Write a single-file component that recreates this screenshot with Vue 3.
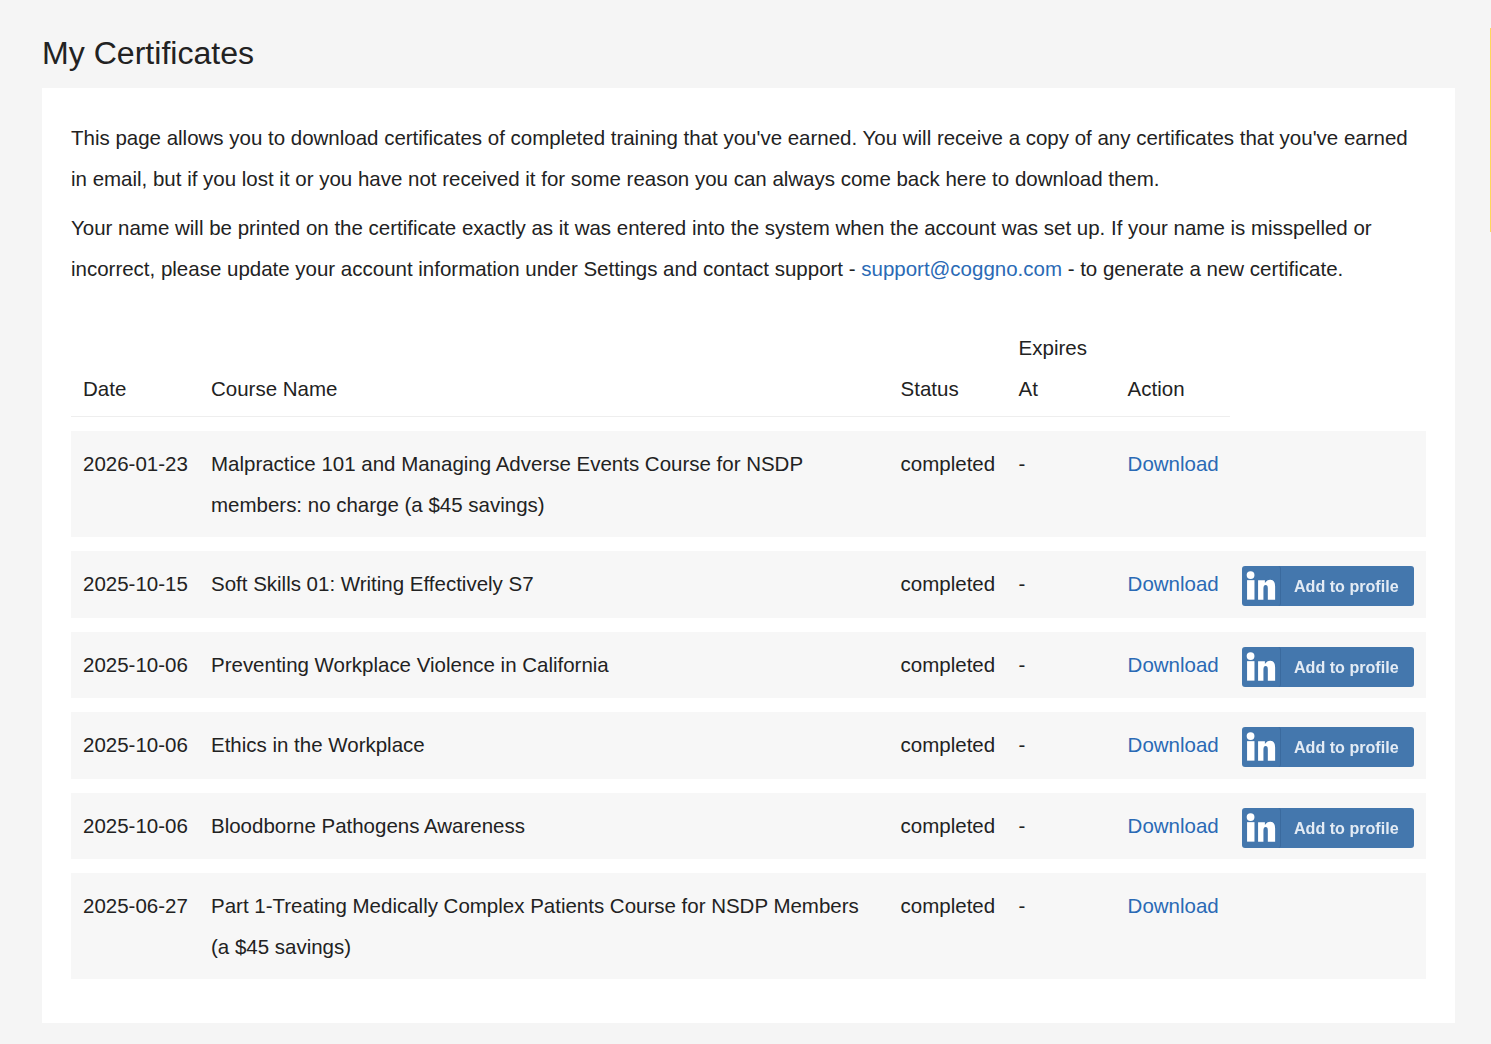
<template>
  <div class="page">
    <h1>My Certificates</h1>
    <div class="panel">
      <p>This page allows you to download certificates of completed training that you've earned. You will receive a copy of any certificates that you've earned in email, but if you lost it or you have not received it for some reason you can always come back here to download them.</p>
      <p>Your name will be printed on the certificate exactly as it was entered into the system when the account was set up. If your name is misspelled or incorrect, please update your account information under Settings and contact support - <a href="#">support@coggno.com</a> - to generate a new certificate.</p>
      <table>
        <colgroup>
          <col class="c-date" />
          <col class="c-name" />
          <col class="c-status" />
          <col class="c-expires" />
          <col class="c-action" />
          <col />
        </colgroup>
        <thead>
          <tr>
            <th>Date</th>
            <th>Course Name</th>
            <th>Status</th>
            <th>Expires At</th>
            <th>Action</th>
            <th class="blank"></th>
          </tr>
        </thead>
        <tbody>
          <tr v-for="row in rows" :key="row.name">
            <td class="nowrap">{{ row.date }}</td>
            <td>{{ row.name }}</td>
            <td>completed</td>
            <td>-</td>
            <td><a href="#">Download</a></td>
            <td>
              <div v-if="row.linkedin" class="li-btn">
                <svg class="li-logo" viewBox="0 0 39 40" width="39" height="40">
                  <circle cx="8.800" cy="8.800" r="4" fill="#fff" />
                  <rect x="5.200" y="14" width="7.600" height="20" fill="#fff" />
                  <path d="M16.500 14h7v3c1.400-2.300 3.200-3.500 5.500-3.500 3.800 0 5 3 5 7v13.500h-7.500v-11.500c0-2.500-.7-3.500-2.200-3.500s-2.300 1.200-2.300 3.500v11.500h-5.500z" fill="#fff" />
                </svg>
                <span class="li-text">Add to profile</span>
              </div>
            </td>
          </tr>
        </tbody>
      </table>
    </div>
    <div class="edge"></div>
  </div>
</template>

<script setup>
const rows = [
  { date: '2026-01-23', name: 'Malpractice 101 and Managing Adverse Events Course for NSDP members: no charge (a $45 savings)', linkedin: false },
  { date: '2025-10-15', name: 'Soft Skills 01: Writing Effectively S7', linkedin: true },
  { date: '2025-10-06', name: 'Preventing Workplace Violence in California', linkedin: true },
  { date: '2025-10-06', name: 'Ethics in the Workplace', linkedin: true },
  { date: '2025-10-06', name: 'Bloodborne Pathogens Awareness', linkedin: true },
  { date: '2025-06-27', name: 'Part 1-Treating Medically Complex Patients Course for NSDP Members (a $45 savings)', linkedin: false },
]
</script>

<style>
body {
  background: #f5f5f5;
}
</style>

<style scoped>
.page {
  min-height: 1044px;
  padding: 0 36px 0 42px;
  box-sizing: border-box;
  font-family: "Liberation Sans", Arial, sans-serif;
  font-size: 20.49px;
  line-height: 40.96px;
  color: #222;
  background: #f5f5f5;
}

h1 {
  margin: 0;
  padding-top: 33px;
  height: 88px;
  box-sizing: border-box;
  font-size: 32.1px;
  font-weight: 400;
  line-height: 40px;
}

.panel {
  background: #fff;
  padding: 30px 29px 30px;
}

p {
  margin: 0 0 8px;
}

a {
  color: #2a6ab5;
  text-decoration: none;
}

table {
  width: 100%;
  margin-top: 24.45px;
  border-collapse: separate;
  border-spacing: 0 14.08px;
  table-layout: fixed;
}

.c-date { width: 128px; }
.c-name { width: 689.6px; }
.c-status { width: 118px; }
.c-expires { width: 109px; }
.c-action { width: 114.4px; }

th {
  padding: 0 12px 6px;
  font-weight: 400;
  text-align: left;
  vertical-align: bottom;
  border-bottom: 1px solid #eee;
}

th.blank {
  border-bottom: none;
}

td {
  padding: 13px 12px 11px;
  background: #f7f7f7;
  vertical-align: top;
}

td.nowrap {
  white-space: nowrap;
}

.li-btn {
  display: flex;
  width: 172px;
  height: 40px;
  margin-top: 2px;
  margin-bottom: 0.5px;
  border-radius: 3px;
  overflow: hidden;
  background: #4477ad;
}

.li-logo {
  flex: none;
  box-sizing: border-box;
  border-right: 1px solid #3a6a9e;
  border-radius: 0 3px 3px 0;
  filter: blur(0.3px);
}

.li-text {
  padding-left: 13px;
  font-size: 16.1px;
  font-weight: 700;
  line-height: 40px;
  color: #e3ebf4;
  white-space: nowrap;
  filter: blur(0.4px);
}

.edge {
  position: absolute;
  top: 28px;
  right: 0;
  width: 1px;
  height: 204px;
  background: #ffd95a;
}
</style>
